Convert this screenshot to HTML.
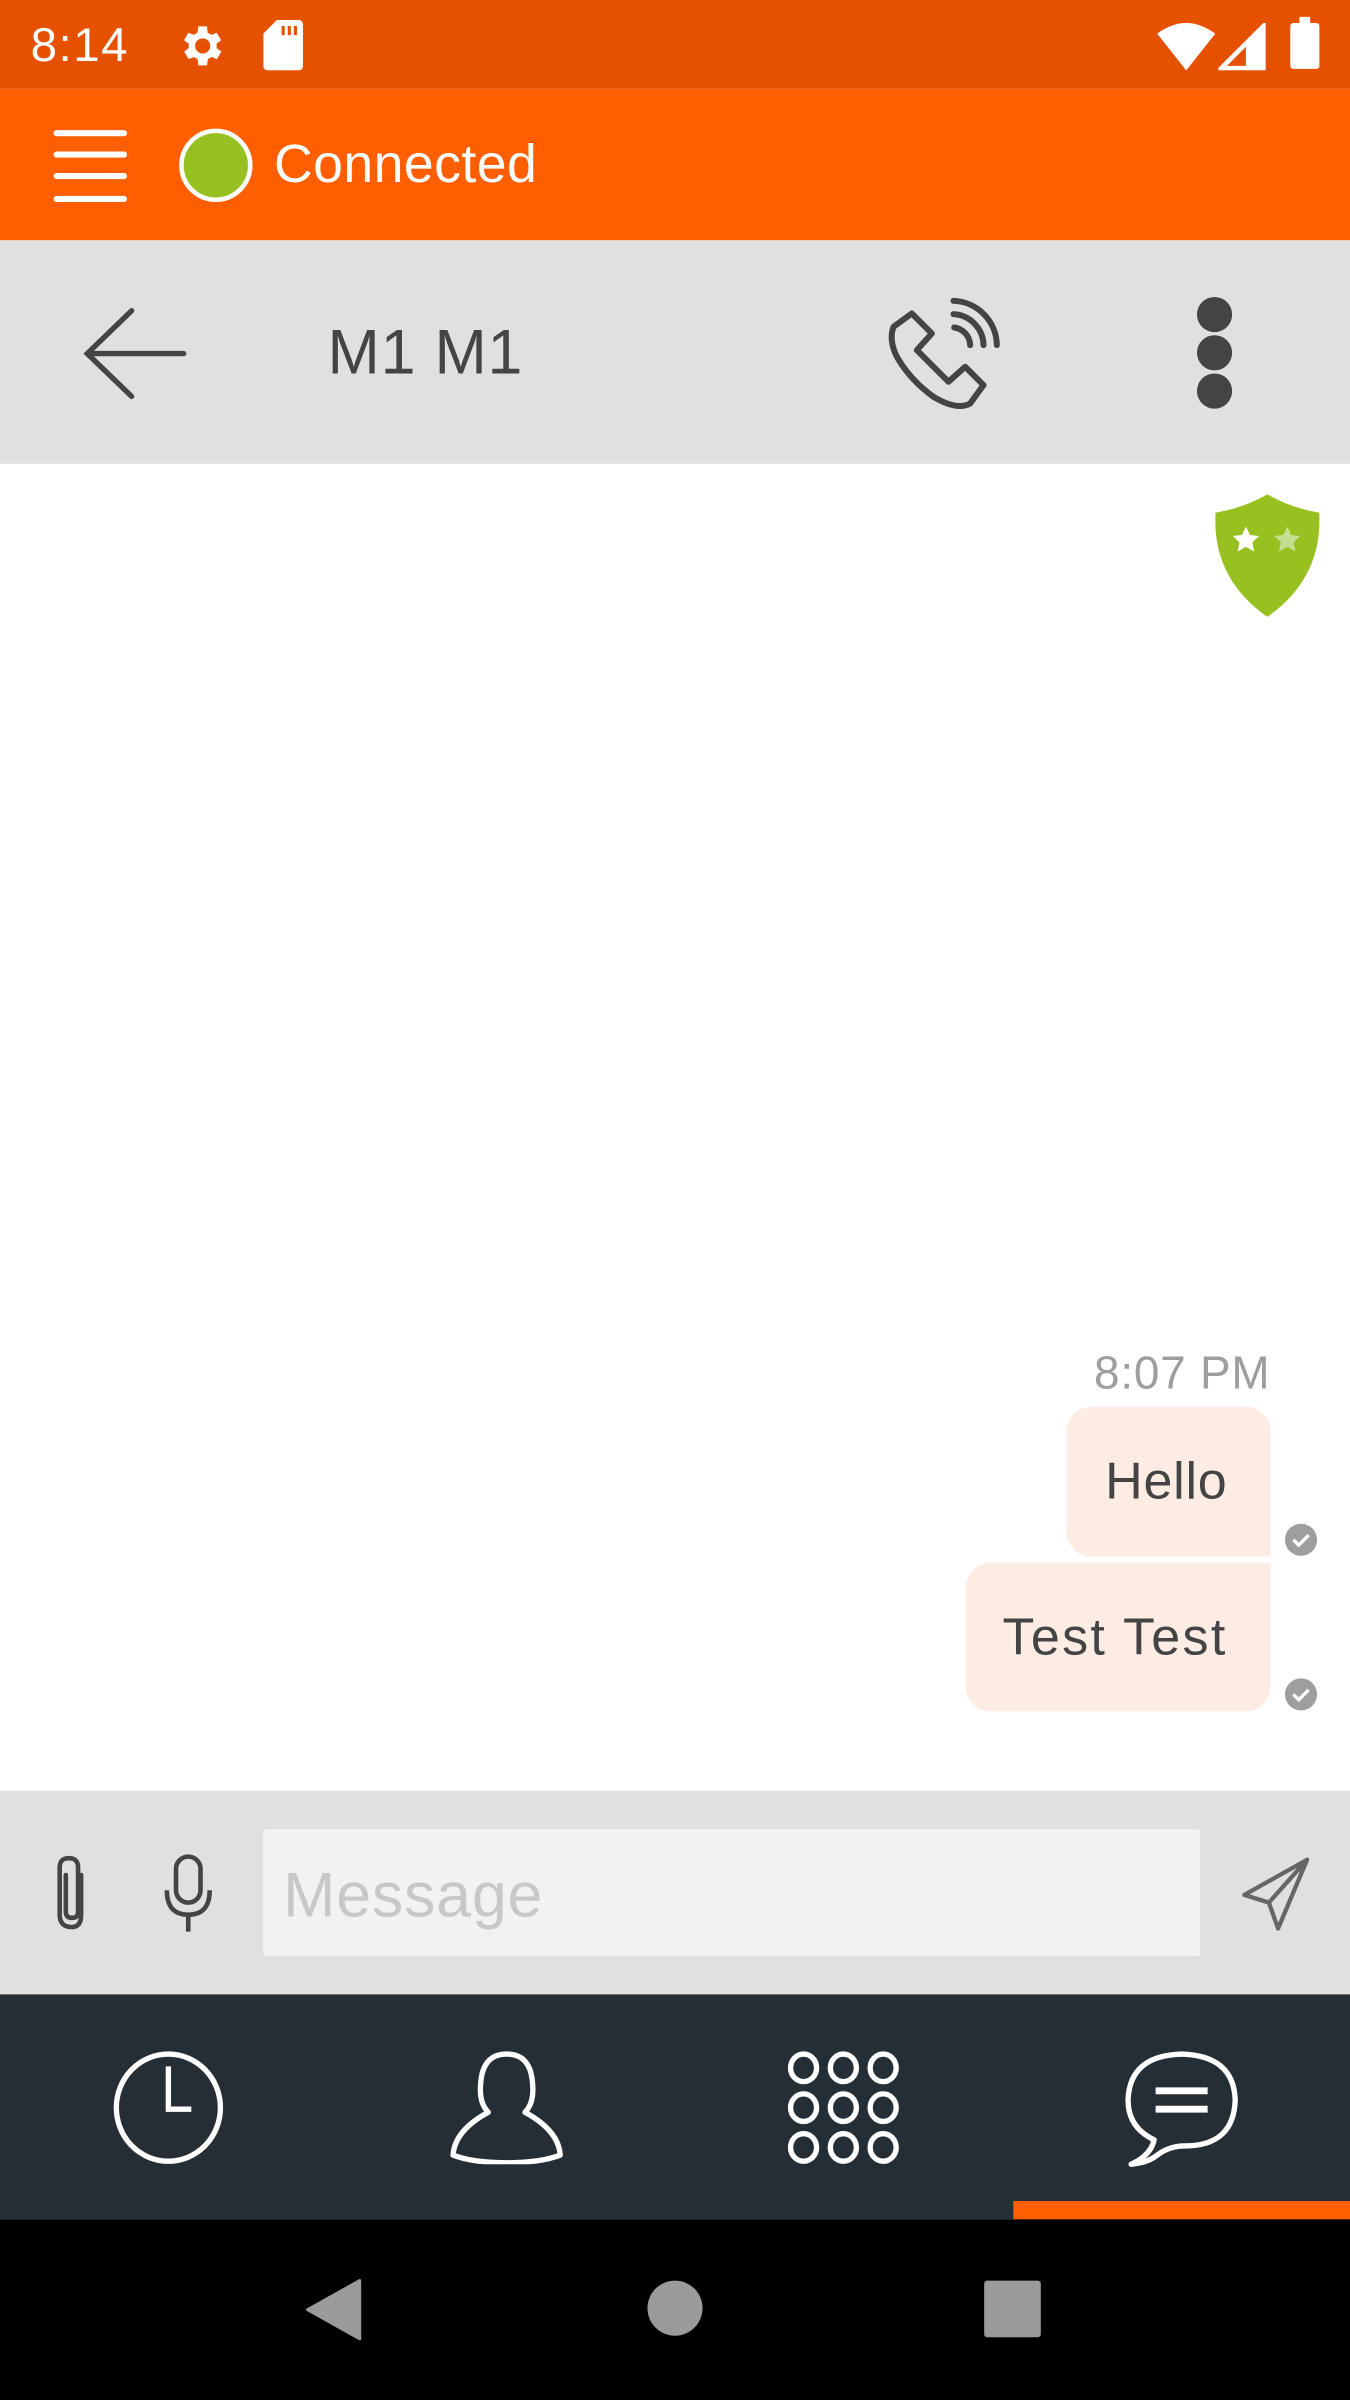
<!DOCTYPE html>
<html><head><meta charset="utf-8"><style>
html,body{margin:0;padding:0;width:1350px;height:2400px;overflow:hidden;background:#fff;font-family:"Liberation Sans",sans-serif}
#w{position:absolute;left:0;top:0;width:882px;height:1568px;transform:scale(1.530612);transform-origin:0 0}
.a{position:absolute}
</style></head><body><div id="w">
<div class="a" style="left:0;top:0;width:882px;height:58px;background:#E65100"></div>
<div class="a" style="left:20px;top:12px;font-size:31px;color:#fff;letter-spacing:1px">8:14</div>
<svg class="a" style="left:113px;top:13px" width="36" height="34" viewBox="0 0 24 24"><path fill="#fff" d="M19.4 13a7.5 7.5 0 0 0 0-2l2.1-1.6-2-3.5-2.5 1a7 7 0 0 0-1.7-1L15 3h-4l-.4 2.9a7 7 0 0 0-1.7 1l-2.5-1-2 3.5L6.6 11a7.5 7.5 0 0 0 0 2l-2.1 1.6 2 3.5 2.5-1a7 7 0 0 0 1.7 1L11 21h4l.4-2.9a7 7 0 0 0 1.7-1l2.5 1 2-3.5zM13 15.5a3.5 3.5 0 1 1 0-7 3.5 3.5 0 0 1 0 7z"/></svg>
<svg class="a" style="left:172px;top:13px" width="26" height="33" viewBox="0 0 26 33"><path fill="#fff" d="M9 0h14a3 3 0 0 1 3 3v27a3 3 0 0 1-3 3H3a3 3 0 0 1-3-3V9z"/><rect x="12" y="4" width="2" height="6" fill="#E65100"/><rect x="16" y="4" width="2" height="6" fill="#E65100"/><rect x="20" y="4" width="2" height="6" fill="#E65100"/></svg>
<svg class="a" style="left:756px;top:14px" width="38" height="32" viewBox="0 0 38 32"><path fill="#fff" d="M0 8Q19-6 38 8L19 32z"/></svg>
<svg class="a" style="left:796px;top:15px" width="31" height="31" viewBox="0 0 31 31"><path fill="none" stroke="#fff" stroke-width="3" d="M2 29.5H29.5V2Z"/><path fill="#fff" d="M18 29.5V13l11.5-11V29.5z"/></svg>
<div class="a" style="left:843px;top:15px;width:19px;height:30px;background:#fff;border-radius:2px"></div>
<div class="a" style="left:849px;top:11px;width:7px;height:5px;background:#fff"></div>

<div class="a" style="left:0;top:58px;width:882px;height:99px;background:#FF5F00"></div>
<div class="a" style="left:35px;top:85px;width:48px;height:4px;background:#fff;border-radius:2px"></div>
<div class="a" style="left:35px;top:99px;width:48px;height:4px;background:#fff;border-radius:2px"></div>
<div class="a" style="left:35px;top:113px;width:48px;height:4px;background:#fff;border-radius:2px"></div>
<div class="a" style="left:35px;top:128px;width:48px;height:4px;background:#fff;border-radius:2px"></div>
<div class="a" style="left:117px;top:84px;width:42px;height:42px;border-radius:50%;background:#97C120;border:3px solid #fff"></div>
<div class="a" style="left:179px;top:88px;font-size:35px;color:#fff;letter-spacing:0.3px">Connected</div>

<div class="a" style="left:0;top:157px;width:882px;height:146px;background:#E0E0E0"></div>
<svg class="a" style="left:52px;top:200px" width="72" height="62" viewBox="0 0 72 62"><path fill="none" stroke="#444" stroke-width="3.5" stroke-linecap="round" d="M34 3L5 31 34 59M5 31H68"/></svg>
<div class="a" style="left:214px;top:207px;font-size:41px;color:#444;letter-spacing:0.5px">M1 M1</div>
<svg class="a" style="left:561.9px;top:182.9px" width="104.5" height="91.5" viewBox="0 0 480 420"><g fill="none" stroke="#444" stroke-width="18" stroke-linejoin="round" stroke-linecap="round"><path d="M100 140L155 100 215 160 170 210 265 305 315 260 370 315 330 370Q290 392 220 350Q150 300 110 230Q85 180 100 140Z"/><path d="M280 62A135 135 0 0 1 410 195M280 102A95 95 0 0 1 370 195M282 142A55 55 0 0 1 330 195"/></g></svg>
<div class="a" style="left:782px;top:194px;width:23px;height:23px;border-radius:50%;background:#444"></div>
<div class="a" style="left:782px;top:219px;width:23px;height:23px;border-radius:50%;background:#444"></div>
<div class="a" style="left:782px;top:244px;width:23px;height:23px;border-radius:50%;background:#444"></div>

<svg class="a" style="left:794px;top:323px" width="68" height="80" viewBox="0 0 68 80"><path fill="#97C120" d="M34 0Q50 9 68 12Q70 55 34 80Q-2 55 0 12Q18 9 34 0Z"/><path fill="#fff" d="M20 21l2.6 5.5 6 .7-4.4 4.1 1.2 6-5.4-3-5.4 3 1.2-6-4.4-4.1 6-.7z"/><path fill="#c5df90" d="M47 21l2.6 5.5 6 .7-4.4 4.1 1.2 6-5.4-3-5.4 3 1.2-6-4.4-4.1 6-.7z"/></svg>

<div class="a" style="right:52px;top:881px;font-size:30px;color:#9e9e9e;letter-spacing:0.5px">8:07 PM</div>
<div class="a" style="left:697px;top:919px;width:133px;height:98px;background:#FDECE4;border-radius:16px 16px 0 16px"></div>
<div class="a" style="left:722px;top:949px;font-size:34px;color:#444;letter-spacing:0.5px">Hello</div>
<div class="a" style="left:631px;top:1021px;width:199px;height:97px;background:#FDECE4;border-radius:16px 0 16px 16px"></div>
<div class="a" style="left:655px;top:1051px;font-size:34px;color:#444;letter-spacing:1.5px">Test Test</div>
<svg class="a" style="left:839px;top:995px" width="22" height="22" viewBox="0 0 22 22"><circle cx="11" cy="11" r="10.5" fill="#9e9e9e"/><path d="M6 11l3.5 3.5L16 8" fill="none" stroke="#fff" stroke-width="2.2"/></svg>
<svg class="a" style="left:839px;top:1096px" width="22" height="22" viewBox="0 0 22 22"><circle cx="11" cy="11" r="10.5" fill="#9e9e9e"/><path d="M6 11l3.5 3.5L16 8" fill="none" stroke="#fff" stroke-width="2.2"/></svg>

<div class="a" style="left:0;top:1170px;width:882px;height:133px;background:#E0E0E0"></div>
<div class="a" style="left:172px;top:1195px;width:612px;height:83px;background:#F2F2F2;border-radius:2px"></div>
<div class="a" style="left:185px;top:1215px;font-size:41px;color:#c8c8c8;letter-spacing:0.5px">Message</div>
<svg class="a" style="left:33px;top:1211px" width="30" height="52" viewBox="0 0 30 52"><path fill="none" stroke="#444" stroke-width="3" stroke-linecap="round" d="M20 14V40Q20 48 14 48Q6 48 6 40V9Q6 3 12 3Q18 3 18 9V38Q18 42 14 42Q10 42 10 38V14"/></svg>
<svg class="a" style="left:104px;top:1211px" width="38" height="52" viewBox="0 0 38 52"><rect x="11" y="2" width="16" height="30" rx="8" fill="none" stroke="#444" stroke-width="3"/><path d="M5 24Q5 40 19 40Q33 40 33 24M19 40V51" fill="none" stroke="#444" stroke-width="3"/></svg>
<svg class="a" style="left:810px;top:1212px" width="48" height="50" viewBox="0 0 48 50"><path fill="none" stroke="#666" stroke-width="2.8" stroke-linejoin="round" d="M44 3L3 26 19 31 25 48Z M19 31L44 3"/></svg>

<div class="a" style="left:0;top:1303px;width:882px;height:147px;background:#252D35"></div>
<svg class="a" style="left:74px;top:1340px" width="72" height="74" viewBox="0 0 72 74"><ellipse cx="36" cy="37" rx="34" ry="35" fill="none" stroke="#fff" stroke-width="3.5"/><path d="M36 10V38H51" fill="none" stroke="#fff" stroke-width="3.5"/></svg>
<svg class="a" style="left:293px;top:1340px" width="76" height="74" viewBox="0 0 76 74"><path fill="none" stroke="#fff" stroke-width="3.5" stroke-linejoin="round" d="M38 2Q54 2 55 22Q56 34 50 40Q72 52 73 68Q60 73 38 73Q16 73 3 68Q4 52 26 40Q20 34 21 22Q22 2 38 2Z"/></svg>
<svg class="a" style="left:514px;top:1340px" width="74" height="74" viewBox="0 0 74 74"><g fill="none" stroke="#fff" stroke-width="3.5"><ellipse cx="11" cy="11" rx="8.5" ry="9"/><ellipse cx="37" cy="11" rx="8.5" ry="9"/><ellipse cx="63" cy="11" rx="8.5" ry="9"/><ellipse cx="11" cy="37" rx="8.5" ry="9"/><ellipse cx="37" cy="37" rx="8.5" ry="9"/><ellipse cx="63" cy="37" rx="8.5" ry="9"/><ellipse cx="11" cy="63" rx="8.5" ry="9"/><ellipse cx="37" cy="63" rx="8.5" ry="9"/><ellipse cx="63" cy="63" rx="8.5" ry="9"/></g></svg>
<svg class="a" style="left:734px;top:1340px" width="76" height="76" viewBox="0 0 76 76"><path fill="none" stroke="#fff" stroke-width="3.5" stroke-linejoin="round" d="M20 58Q3 50 3 32Q4 3 38 2Q72 3 73 32Q72 62 40 62Q30 62 22 68Q16 73 5 74Q18 68 20 58Z"/><path d="M21 26H55M21 38H55" stroke="#fff" stroke-width="4.5"/></svg>
<div class="a" style="left:662px;top:1438px;width:220px;height:12px;background:#FF5F00"></div>

<div class="a" style="left:0;top:1450px;width:882px;height:118px;background:#000"></div>
<svg class="a" style="left:198px;top:1488px" width="40" height="42" viewBox="0 0 40 42"><path d="M37 2V40L3 21Z" fill="#9a9a9a" stroke="#9a9a9a" stroke-width="2" stroke-linejoin="round"/></svg>
<div class="a" style="left:423px;top:1490px;width:36px;height:36px;border-radius:50%;background:#9a9a9a"></div>
<div class="a" style="left:643px;top:1490px;width:37px;height:37px;border-radius:2px;background:#9a9a9a"></div>
</div></body></html>
